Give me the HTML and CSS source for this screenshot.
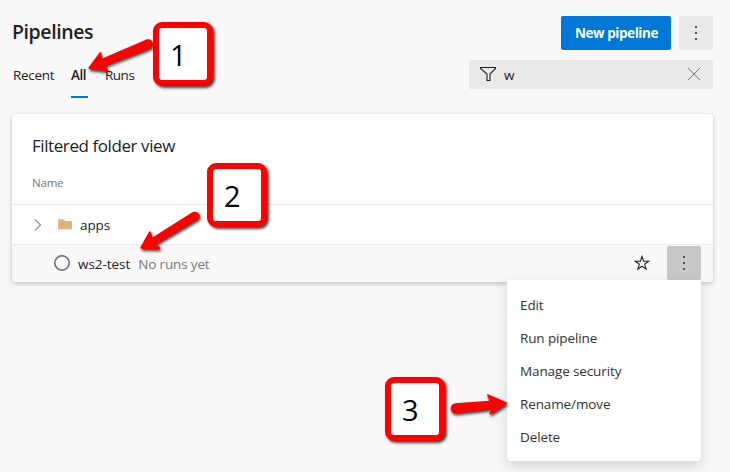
FILE: index.html
```html
<!DOCTYPE html>
<html lang="en">
<head>
<meta charset="utf-8">
<title>Pipelines</title>
<link rel="stylesheet" href="styles.css">
</head>
<body>
<main class="page">
  <header class="header">
    <h1 class="title">Pipelines</h1>
    <button class="primary">New pipeline</button>
    <button class="more" aria-label="More actions"><i></i><i></i><i></i></button>
  </header>
  <div class="toolbar">
    <nav class="tabs">
      <a class="tab recent">Recent</a>
      <a class="tab all active">All</a>
      <a class="tab runs">Runs</a>
    </nav>
    <div class="filter">
      <svg class="funnel" width="18" height="16" viewBox="0 0 18 16"><path d="M1.5 1.500h15v1l-5.500 5.500v6.500h-3V8L1.500 2.500z" fill="none" stroke="#222" stroke-width="1.100"/></svg>
      <span class="query">w</span>
      <svg class="clear" width="14" height="14" viewBox="0 0 14 14"><path d="M1 1l12 12M13 1L1 13" stroke="#777" fill="none"/></svg>
    </div>
  </div>
  <section class="card">
    <h2 class="card-title">Filtered folder view</h2>
    <div class="column">Name</div>
    <div class="row">
      <svg class="chevron" width="8" height="12" viewBox="0 0 8 12"><path d="M1 .5L6.500 6L1 11.500" fill="none" stroke="#444" stroke-width="1"/></svg>
      <svg class="folder" width="14" height="11" viewBox="0 0 14 11"><path d="M0 1Q0 .3.7.3H5.300L7.300 2H13.300Q14 2 14 2.700V10.300H0z" fill="#dcb67a"/></svg>
      <span class="apps">apps</span>
    </div>
    <div class="row selected">
      <svg class="status" width="16" height="16" viewBox="0 0 16 16"><circle cx="8" cy="8" r="7.200" fill="none" stroke="#666" stroke-width="1.500"/></svg>
      <span class="name">ws2-test</span>
      <span class="note">No runs yet</span>
      <svg class="star" width="16" height="16" viewBox="0 0 16 16"><path d="M8 1.500L9.600 6.200H14.800L10.600 9.300L12.200 14.200L8 11.200L3.800 14.200L5.400 9.300L1.200 6.200H6.400z" fill="none" stroke="#222" stroke-width="1.100"/></svg>
      <div class="more pressed"><i></i><i></i><i></i>
        <ul class="menu">
          <li>Edit</li>
          <li>Run pipeline</li>
          <li>Manage security</li>
          <li>Rename/move</li>
          <li>Delete</li>
        </ul>
      </div>
    </div>
  </section>
</main>
<svg class="arrows" width="730" height="472" viewBox="0 0 730 472">
  <path d="M88.700 67.300L99.800 52.200Q101 51.300 101.300 53L102.300 58.500L146.500 39.600C151 38 155.200 43.500 151.500 47.300Q151 48.200 149 49L105.500 65.700L108 70Q108.600 71.500 106.500 71.300L90 69.200Q88 68.800 88.700 67.300z"/>
  <path d="M140.500 247L149 232Q150 230.500 151 232.500L152.500 237.500L192 212.500C197 210 202.500 215.500 198.500 219L156 244.300L160.300 247.500Q161 249.300 159 249.300L142 249Q140 248.700 140.500 247z"/>
  <path d="M506.500 402.300L488 394.200Q486.700 394 487.200 395.600L489.500 400.800L455.500 403.300C449 404 449 413.300 456 413.400L491.300 409.300L489.500 413Q489.300 415 491 414.400L506.500 404Q507.800 403 506.500 402.300z"/>
</svg>
<div class="callout one">1</div>
<div class="callout two">2</div>
<div class="callout three">3</div>
</body>
</html>
```
FILE: styles.css
```css
* { box-sizing: border-box; }
body {
  margin: 0;
  width: 730px;
  height: 472px;
  overflow: hidden;
  position: relative;
  background: #f8f8f8;
  color: #222;
  font: 13.500px/20px "Open Sans", "Noto Sans", sans-serif;
}
h1, h2, ul { margin: 0; padding: 0; }
.page { padding: 16px 17px 0 12px; }
.header { display: flex; height: 34px; gap: 8px; }
.title { flex: 1; font-size: 19.500px; line-height: 31px; font-weight: 600; letter-spacing: -.4px; }
.primary {
  width: 110px; border: 0; border-radius: 2px; padding: 0 0 0 1px;
  background: #0078d7; color: #fff;
  font: 700 13.500px/34px "Open Sans", sans-serif; letter-spacing: -.45px;
}
.more {
  width: 34px; height: 34px; border: 0; border-radius: 2px; padding: 0;
  background: #e9e9e9;
  display: flex; flex-direction: column; align-items: center; justify-content: center; gap: 4px;
}
.more i { width: 2px; height: 2px; background: #555; }
.toolbar { display: flex; justify-content: space-between; height: 64px; padding-top: 10px; }
.tabs { display: flex; gap: 17px; height: 38px; }
.tab { line-height: 31px; padding-left: 1px; }
.recent { width: 42px; letter-spacing: -.3px; }
.all { width: 17px; padding-left: 0; font-weight: 600; letter-spacing: -.5px; }
.runs { padding-left: 0; letter-spacing: -.5px; }
.active { border-bottom: 2px solid #0078d7; }
.filter {
  width: 244px; height: 29px; padding: 0 12px 0 10px;
  display: flex; align-items: center;
  background: #e9e9e9; border-radius: 2px;
}
.funnel, .clear { margin-bottom: 1px; }
.query { flex: 1; margin-left: 7px; }
.card {
  height: 168px; background: #fff; border-radius: 4px;
  box-shadow: 0 2px 5px rgba(0,0,0,.2), 0 0 2px rgba(0,0,0,.08);
}
.card-title { padding: 20px 20px 0; font-size: 17px; line-height: 24px; font-weight: 400; letter-spacing: -.42px; }
.column { height: 46px; padding: 15px 20px 0; font-size: 11.500px; line-height: 20px; color: #777; letter-spacing: -.2px; }
.row { display: flex; align-items: center; height: 40px; border-top: 1px solid #e9e9e9; padding-left: 22px; }
.chevron { margin: 0 16px 0 0; }
.folder { margin-right: 8px; }
.apps { letter-spacing: -.1px; }
.selected { height: 38px; padding: 0 12px 0 42px; background: #f8f8f8; border-radius: 0 0 4px 4px; }
.status { margin: -2px 8px 0 0; }
.name { margin-right: 8px; letter-spacing: -.05px; }
.note { color: #777; flex: 1; letter-spacing: -.15px; }
.star { margin: -1px 17px 0 0; }
.pressed { position: relative; margin-top: -2px; background: #c8c8c8; }
.menu {
  position: absolute; top: 34px; right: 0; z-index: 1;
  width: 194px; height: 181px; padding: 9px 13px; list-style: none;
  background: #fff; border-radius: 0 0 4px 4px;
  box-shadow: 0 5px 14px rgba(0,0,0,.16);
}
.menu li { line-height: 33px; color: #333; letter-spacing: -.12px; }
.arrows { position: absolute; left: 0; top: 0; z-index: 2; fill: #f00; filter: drop-shadow(1.500px 2px 1.500px rgba(0,0,0,.75)); }
.callout {
  position: absolute; z-index: 3; width: 60px; height: 64px;
  border: 6px solid #f00; border-radius: 9px; background: #fff;
  box-shadow: 2px 2px 3px rgba(0,0,0,.75);
  color: #000; font-size: 29px; line-height: 54px; padding-left: 11px;
}
.one { left: 153px; top: 22px; }
.two { left: 207px; top: 163px; }
.three { left: 385px; top: 377px; }
```
